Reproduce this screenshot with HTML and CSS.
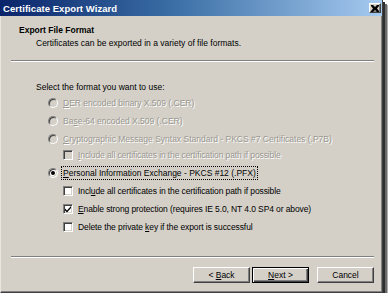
FILE: index.html
```html
<!DOCTYPE html>
<html>
<head>
<meta charset="utf-8">
<link rel="stylesheet" href="styles.css">
</head>
<body>
<div class="window">
  <div class="titlebar">
    <span class="title">Certificate Export Wizard</span>
    <span class="close"><svg width="8" height="7" viewBox="0 0 8 7"><path d="M0 0h2l2 2 2-2h2v1L6 3.5 8 6v1H6L4 5 2 7H0V6l2-2.5L0 1z" fill="#000"/></svg></span>
  </div>
  <div class="header">
    <div class="h-title">Export File Format</div>
    <div class="h-sub">Certificates can be exported in a variety of file formats.</div>
  </div>
  <div class="sep"></div>
  <div class="content">
    <div class="prompt">Select the format you want to use:</div>
    <div class="options">
      <div class="row disabled"><span class="radio"></span><span class="lbl"><u>D</u>ER encoded binary X.509 (.CER)</span></div>
      <div class="row disabled"><span class="radio"></span><span class="lbl">Ba<u>s</u>e-64 encoded X.509 (.CER)</span></div>
      <div class="row disabled"><span class="radio"></span><span class="lbl"><u>C</u>ryptographic Message Syntax Standard - PKCS #7 Certificates (.P7B)</span></div>
      <div class="row sub disabled short"><span class="check"></span><span class="lbl"><u>I</u>nclude all certificates in the certification path if possible</span></div>
      <div class="row"><span class="radio on"></span><span class="lbl focus"><u>P</u>ersonal Information Exchange - PKCS #12 (.PFX)</span></div>
      <div class="row sub"><span class="check"></span><span class="lbl">Incl<u>u</u>de all certificates in the certification path if possible</span></div>
      <div class="row sub"><span class="check"><svg width="8" height="8" viewBox="0 0 8 8"><path d="M1 3.5l2 2 4-4.5v2L3 7.5 1 5.5z" fill="#000"/></svg></span><span class="lbl"><u>E</u>nable strong protection (requires IE 5.0, NT 4.0 SP4 or above)</span></div>
      <div class="row sub"><span class="check"></span><span class="lbl">Delete the private <u>k</u>ey if the export is successful</span></div>
    </div>
  </div>
  <div class="sep bottom"></div>
  <div class="buttons">
    <button class="btn">&lt; <u>B</u>ack</button>
    <button class="btn default"><u>N</u>ext &gt;</button>
    <button class="btn cancel">Cancel</button>
  </div>
</div>
</body>
</html>
```
FILE: styles.css
```css
html, body {
  margin: 0;
  padding: 0;
  background: #ffffff;
}
body {
  font-family: "Liberation Sans", Arial, sans-serif;
  font-size: 8.5px;
  color: #000;
}
.window {
  box-sizing: border-box;
  width: 383px;
  height: 293px;
  background: #d4d0c8;
  border-right: 1px solid #404040;
  border-bottom: 1px solid #404040;
  border-left: 1px solid #e8e6e0;
  box-shadow: inset -1px -1px 0 #808080, 2px 2px 0 #2e2e2e, 4px 4px 0 #6a6a6a, 5px 5px 0 #b0b0b0;
  display: flex;
  flex-direction: column;
}
.titlebar {
  height: 16px;
  margin-left: -1px;
  background: linear-gradient(to right, #0a246a 0%, #3a6ea5 45%, #a6caf0 100%);
  display: flex;
  align-items: center;
  justify-content: space-between;
  padding: 0 1px 0 3px;
  flex: none;
}
.title {
  color: #fff;
  font-weight: bold;
  font-size: 9.5px;
  letter-spacing: 0.05px;
}
.close {
  box-sizing: border-box;
  width: 12px;
  height: 10px;
  background: #d4d0c8;
  border: 1px solid;
  border-color: #fff #404040 #404040 #fff;
  box-shadow: inset -1px -1px 0 #808080;
  display: flex;
  align-items: center;
  justify-content: center;
}
.close svg { display: block; }
.header {
  box-sizing: border-box;
  padding: 8px 0 0 18px;
  height: 44px;
  flex: none;
}
.h-title {
  font-weight: bold;
  line-height: 12px;
}
.h-sub {
  line-height: 12px;
  margin-top: 1px;
  padding-left: 17px;
}
.sep {
  margin: 0 8px 0 10px;
  border-top: 1px solid #808080;
  border-bottom: 1px solid #ffffff;
  height: 0;
  flex: none;
}
.content {
  box-sizing: border-box;
  padding: 19px 0 0 35px;
  height: 194px;
  flex: none;
}
.prompt {
  line-height: 12px;
}
.options {
  margin-top: 4px;
  display: flex;
  flex-direction: column;
  gap: 6px;
}
.row {
  display: flex;
  align-items: center;
  height: 12px;
  padding-left: 12px;
}
.row.sub {
  padding-left: 27px;
}
.row.short { margin-top: -2px; }
.lbl {
  line-height: 12px;
  white-space: nowrap;
  padding: 0 1px;
}
.row.sub .lbl {
  letter-spacing: -0.1px;
}
.row.disabled .lbl {
  color: #9a9890;
  text-shadow: 1px 1px 0 #ffffff;
}
.focus {
  outline: 1px dotted #000;
  outline-offset: 0;
}
.radio {
  box-sizing: border-box;
  width: 10px;
  height: 10px;
  border-radius: 50%;
  border: 1px solid;
  border-color: #808080 #ffffff #ffffff #808080;
  background: #ffffff;
  box-shadow: inset 1px 1px 0 #404040, inset -1px -1px 0 #d4d0c8;
  margin-right: 4px;
  position: relative;
  flex: none;
}
.row.disabled .radio {
  background: #d4d0c8;
}
.radio.on::after {
  content: "";
  position: absolute;
  left: 2px;
  top: 2px;
  width: 4px;
  height: 4px;
  border-radius: 50%;
  background: #000;
}
.check {
  box-sizing: border-box;
  width: 10px;
  height: 10px;
  border: 1px solid;
  border-color: #808080 #ffffff #ffffff #808080;
  background: #ffffff;
  box-shadow: inset 1px 1px 0 #404040, inset -1px -1px 0 #d4d0c8;
  margin-right: 4px;
  flex: none;
  display: flex;
  align-items: center;
  justify-content: center;
}
.check svg { display: block; }
.row.disabled .check {
  background: #d4d0c8;
}
.buttons {
  display: flex;
  justify-content: flex-end;
  padding: 9px 8px 0 0;
}
.btn {
  box-sizing: border-box;
  width: 57px;
  height: 16px;
  padding: 0;
  margin: 0;
  font-family: "Liberation Sans", Arial, sans-serif;
  font-size: 8.5px;
  color: #000;
  background: #d4d0c8;
  border: 1px solid;
  border-color: #ffffff #404040 #404040 #ffffff;
  box-shadow: inset -1px -1px 0 #808080;
  border-radius: 0;
}
.btn.default {
  border: 1px solid #000;
  box-shadow: inset 1px 1px 0 #ffffff, inset -1px -1px 0 #404040, inset -2px -2px 0 #808080;
  margin-left: 2px;
}
.btn.cancel {
  margin-left: 8px;
}
```
